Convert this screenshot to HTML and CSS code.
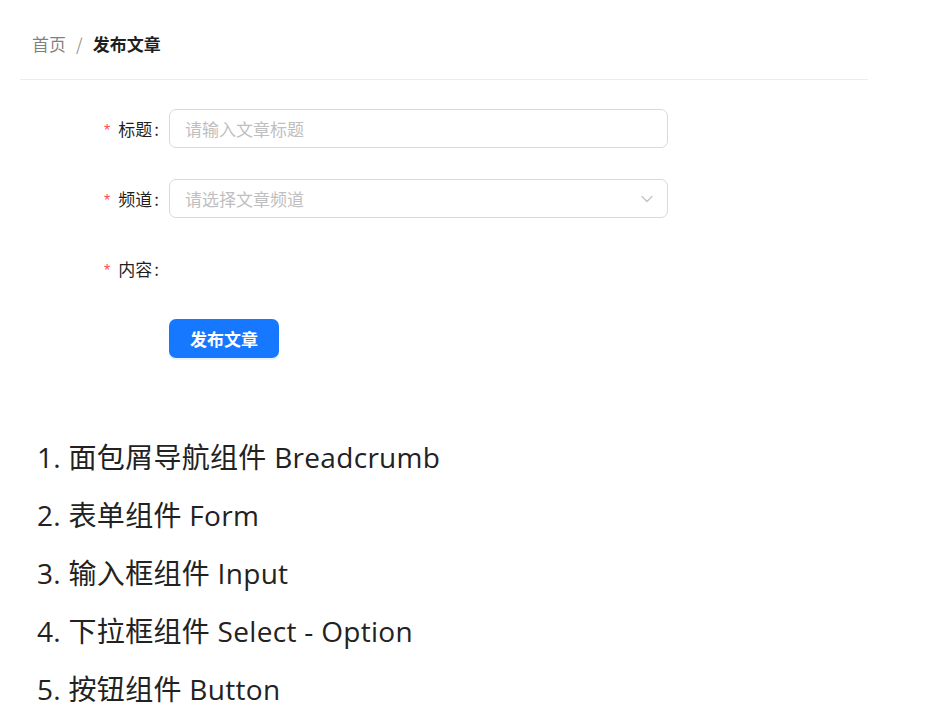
FILE: index.html
```html
<!DOCTYPE html>
<html lang="zh-CN">
<head>
<meta charset="utf-8">
<title>发布文章</title>
<link rel="stylesheet" href="styles.css">
</head>
<body>
<div class="card">
  <div class="card-head">
    <nav class="breadcrumb">
      <span class="crumb link">首页</span>
      <span class="sep">/</span>
      <span class="crumb current">发布文章</span>
    </nav>
  </div>
  <form class="form">
    <div class="row">
      <label class="label"><span class="req">*</span>标题<span class="colon">:</span></label>
      <div class="control"><div class="input"><span class="ph">请输入文章标题</span></div></div>
    </div>
    <div class="row">
      <label class="label"><span class="req">*</span>频道<span class="colon">:</span></label>
      <div class="control"><div class="input select"><span class="ph">请选择文章频道</span>
        <svg class="chev" width="14" height="14" viewBox="0 0 14 14"><path d="M2 4.5 L7 9.5 L12 4.5" fill="none" stroke="#c4c4c4" stroke-width="1.3" stroke-linecap="round" stroke-linejoin="round"/></svg>
      </div></div>
    </div>
    <div class="row">
      <label class="label"><span class="req">*</span>内容<span class="colon">:</span></label>
      <div class="control"></div>
    </div>
    <div class="row">
      <div class="label"></div>
      <div class="control"><button type="button" class="btn">发布文章</button></div>
    </div>
  </form>
</div>
<ol class="list">
  <li>面包屑导航组件 Breadcrumb</li>
  <li>表单组件 Form</li>
  <li>输入框组件 Input</li>
  <li>下拉框组件 Select - Option</li>
  <li>按钮组件 Button</li>
</ol>
</body>
</html>
```
FILE: styles.css
```css
html, body {
  margin: 0;
  padding: 0;
  background: #ffffff;
}
body {
  font-family: "Noto Sans CJK SC", "Noto Sans", sans-serif;
  color: rgba(0, 0, 0, 0.88);
}
.card {
  width: 848px;
  margin-left: 20px;
}
.card-head {
  height: 80px;
  border-bottom: 1px solid #ececec;
  display: flex;
  align-items: center;
  padding-left: 12px;
  box-sizing: border-box;
  padding-top: 9px;
}
.breadcrumb {
  display: flex;
  align-items: center;
  font-size: 17px;
  line-height: 24px;
}
.crumb.link {
  color: rgba(0, 0, 0, 0.5);
}
.sep {
  color: rgba(0, 0, 0, 0.45);
  margin: 0 10px;
}
.crumb.current {
  font-weight: 700;
  color: rgba(0, 0, 0, 0.88);
}
.form {
  padding-top: 29px;
}
.row {
  display: flex;
  align-items: center;
  height: 39px;
  margin-bottom: 31px;
}
.label {
  width: 139px;
  text-align: right;
  font-size: 17px;
  color: rgba(0, 0, 0, 0.88);
  padding-right: 10px;
  white-space: nowrap;
}
.colon {
  margin-left: 2px;
}
.req {
  color: #ff4d4f;
  font-size: 16px;
  margin-right: 8px;
  font-family: "Liberation Sans", sans-serif;
}
.control {
  width: 499px;
}
.input {
  height: 39px;
  box-sizing: border-box;
  border: 1px solid #d9d9d9;
  border-radius: 7px;
  display: flex;
  align-items: center;
  padding: 0 15px;
  font-size: 17px;
}
.ph {
  color: #bfbfbf;
}
.select {
  justify-content: space-between;
}
.chev {
  margin-right: -2px;
}
.btn {
  width: 110px;
  height: 39px;
  border: none;
  border-radius: 7px;
  background: #1677ff;
  color: #ffffff;
  font-family: "Noto Sans CJK SC", sans-serif;
  font-size: 17px;
  font-weight: 700;
  padding: 0;
  box-shadow: 0 2px 0 rgba(5, 145, 255, 0.1);
}
.list {
  margin: 70px 0 0 0;
  padding: 0 0 0 37px;
  list-style: none;
  counter-reset: item;
  font-family: "Open Sans", "Noto Sans CJK SC", sans-serif;
  font-size: 28px;
  letter-spacing: 0.3px;
  line-height: 58px;
  color: #222;
}
.list li {
  counter-increment: item;
}
.list li::before {
  content: counter(item) ". ";
}
```
